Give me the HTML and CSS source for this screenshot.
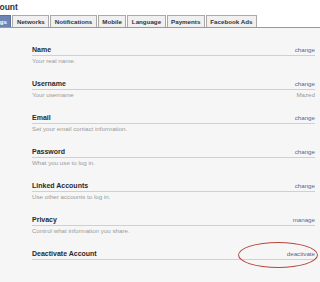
FILE: index.html
```html
<!DOCTYPE html>
<html>
<head>
<meta charset="utf-8">
<link rel="stylesheet" href="styles.css">
</head>
<body>
<div class="page">
  <div class="top">
    <h1 class="title">My Account</h1>
    <ul class="tabs">
      <li class="tab active">Settings</li>
      <li class="tab">Networks</li>
      <li class="tab">Notifications</li>
      <li class="tab">Mobile</li>
      <li class="tab">Language</li>
      <li class="tab">Payments</li>
      <li class="tab">Facebook Ads</li>
    </ul>
  </div>
  <div class="content">
    <div class="row">
      <div class="head"><span class="label">Name</span><a class="link">change</a></div>
      <div class="sub"><span>Your real name.</span></div>
    </div>
    <div class="row">
      <div class="head"><span class="label">Username</span><a class="link">change</a></div>
      <div class="sub"><span>Your username</span><span>Mazed</span></div>
    </div>
    <div class="row">
      <div class="head"><span class="label">Email</span><a class="link">change</a></div>
      <div class="sub"><span>Set your email contact information.</span></div>
    </div>
    <div class="row">
      <div class="head"><span class="label">Password</span><a class="link">change</a></div>
      <div class="sub"><span>What you use to log in.</span></div>
    </div>
    <div class="row">
      <div class="head"><span class="label">Linked Accounts</span><a class="link">change</a></div>
      <div class="sub"><span>Use other accounts to log in.</span></div>
    </div>
    <div class="row">
      <div class="head"><span class="label">Privacy</span><a class="link">manage</a></div>
      <div class="sub"><span>Control what information you share.</span></div>
    </div>
    <div class="row">
      <div class="head"><span class="label">Deactivate Account</span><a class="link">deactivate</a><span class="circle"></span></div>
    </div>
  </div>
</div>
</body>
</html>
```

FILE: styles.css
```css
html, body {
  margin: 0;
  padding: 0;
  background: #f6f6f6;
  overflow: hidden;
}
body {
  width: 320px;
  height: 282px;
  font-family: "Liberation Sans", Arial, sans-serif;
  color: #333;
}
.page {
  margin-left: -22px;
}
.top {
  background: #fff;
}
.title {
  margin: 0 0 0 -8px;
  font-size: 8.5px;
  line-height: 10px;
  height: 12px;
  padding-top: 2px;
  font-weight: bold;
  color: #333;
}
.tabs {
  list-style: none;
  margin: 0;
  padding: 0;
  display: flex;
  gap: 1px;
  border-bottom: 1px solid #999;
  height: 13px;
}
.tab {
  height: 12px;
  box-sizing: border-box;
  border: 1px solid #aaa;
  border-bottom: none;
  background: #f0f0f0;
  font-size: 6.2px;
  font-weight: bold;
  line-height: 11px;
  padding: 0 3.5px;
  color: #333;
  margin-top: 1px;
}
.tab.active {
  background: #6d84b4;
  border-color: #5a70a0;
  color: #fff;
}
.content {
  padding: 16px 5px 0 54px;
}
.row {
  margin-bottom: 12px;
}
.head {
  position: relative;
  display: flex;
  justify-content: space-between;
  align-items: baseline;
  height: 11px;
  border-bottom: 1px solid #c9d0df;
}
.label {
  font-size: 7px;
  font-weight: bold;
  line-height: 11px;
  color: #2a2a2a;
}
.link {
  font-size: 6.2px;
  line-height: 11px;
  color: #55668f;
}
.sub {
  display: flex;
  justify-content: space-between;
  font-size: 6.2px;
  line-height: 10px;
  color: #9a9a9a;
}
.circle {
  position: absolute;
  right: -3px;
  top: -6px;
  width: 80px;
  height: 26px;
  box-sizing: border-box;
  border: 1px solid #b5483c;
  border-radius: 50%;
}
```
